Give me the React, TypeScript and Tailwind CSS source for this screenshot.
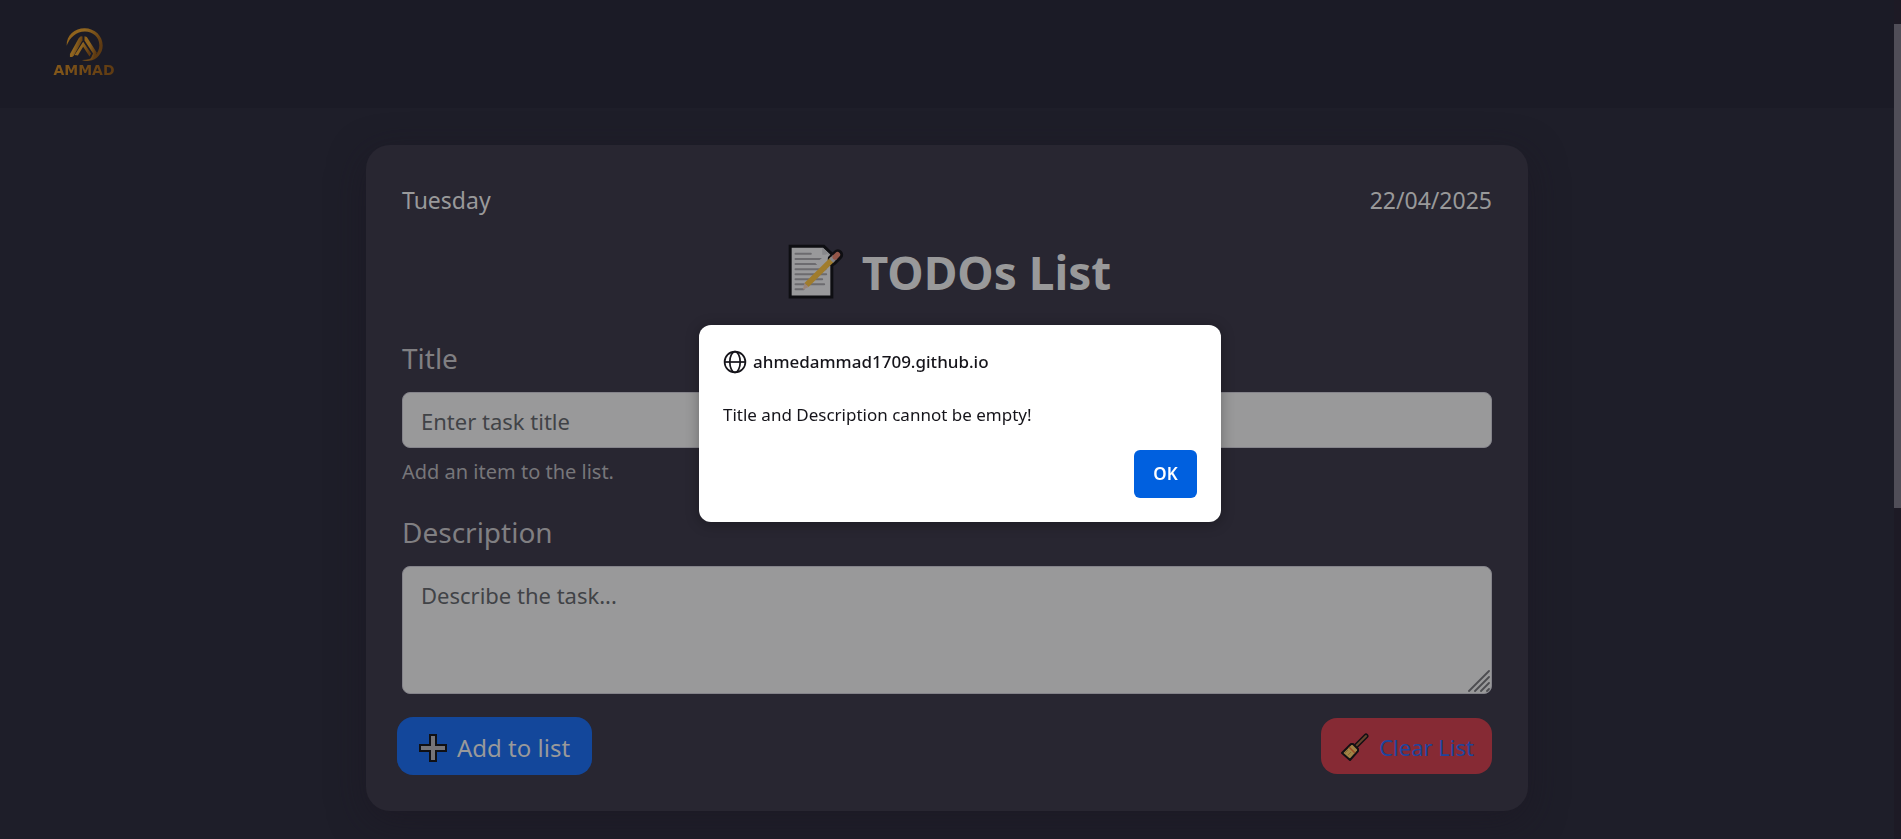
import React from 'react';

function Logo() {
  return (
    <a href="#" aria-label="Ammad home" className="flex w-16 flex-col items-center pb-1">
      <svg viewBox="108 52 118 104" className="h-[35px] w-[39px]" aria-hidden="true">
        <defs>
          <linearGradient id="gold" x1="0" y1="0" x2="1" y2="0.4">
            <stop offset="0" stopColor="#8e6018" />
            <stop offset="0.45" stopColor="#916620" />
            <stop offset="1" stopColor="#5e3a12" />
          </linearGradient>
        </defs>
        <g fill="url(#gold)">
          <path d="M113 108C112 76 138 55 167 55C199 55 222 79 222 107C222 131 204 151 182 153C174 154 166 154 159 151C190 152 212 132 212 106C212 82 192 65 168 65C143 65 123 82 113 108Z" />
          <path d="M123 133L150 84L156 79L161 80V91L135 137L130 142L123 142Z" />
          <path d="M167 79L174 81L204 128C202 138 195 147 184 151L193 131L167 92Z" />
          <path d="M163 96L187 131L182 140L163 111L147 137L137 136Z" />
        </g>
      </svg>
      <span className="bg-linear-to-r from-[#85591a] to-[#5e3a12] bg-clip-text font-['DejaVu_Sans',sans-serif] text-sm leading-4 font-bold text-transparent">
        AMMAD
      </span>
    </a>
  );
}

function MemoIcon() {
  return (
    <svg viewBox="85 76 170 168" className="h-14 w-[57px]" aria-hidden="true">
      <path d="M94 83H195L219 106V235H94Z" fill="#99999b" stroke="#0e0e12" strokeWidth="9" />
      <path d="M190 87V108H214Z" fill="#88888b" />
      <path d="M110 105H156M110 121H202M110 136H190M110 152H200M110 167H202M110 182H190M110 197H196M110 212H134" stroke="#6c6b6f" strokeWidth="6" strokeLinecap="round" />
      <path d="M219 126L237 108" stroke="#0e0e12" strokeWidth="32" strokeLinecap="round" />
      <path d="M207 104V146L190 154L170 134Z" fill="#99999b" />
      <path d="M143 199L222 121" stroke="#a07c2c" strokeWidth="17" />
      <path d="M137 193L149 205L132 213Z" fill="#9c8478" />
      <path d="M217 126L229 114" stroke="#858488" strokeWidth="17" />
      <path d="M229 115L236 108" stroke="#945548" strokeWidth="16" strokeLinecap="round" />
    </svg>
  );
}

function PlusIcon() {
  return (
    <svg viewBox="0 0 28 28" className="size-7" aria-hidden="true">
      <path d="M11 1H17V11H27V17H17V27H11V17H1V11H11Z" fill="#757478" stroke="#101014" strokeWidth="2" />
    </svg>
  );
}

function BrushIcon() {
  return (
    <svg viewBox="0 0 28 28" className="size-7" aria-hidden="true">
      <path d="M25 3L14 14" stroke="#131014" strokeWidth="5" strokeLinecap="round" />
      <path d="M25 3L13 15" stroke="#66452c" strokeWidth="2" strokeLinecap="round" />
      <path d="M10 11L12 11L17 16V18L9 27L1 20Z" fill="#a18244" stroke="#131014" strokeWidth="2" strokeLinejoin="round" />
      <path d="M8 14L14 20" stroke="#9c4a26" strokeWidth="1.5" />
      <path d="M4 20L7 17M7 22L10 19" stroke="#816a35" />
    </svg>
  );
}

function GlobeIcon() {
  return (
    <svg viewBox="0 0 24 24" className="size-6" fill="none" stroke="#15141a" strokeWidth="1.7" aria-hidden="true">
      <circle cx="12" cy="12" r="10.4" />
      <path d="M1.7 12H22.3" />
      <ellipse cx="12" cy="12" rx="5.2" ry="10.4" />
    </svg>
  );
}

function ResizeGrip() {
  return (
    <svg viewBox="0 0 22 22" className="pointer-events-none absolute right-[2px] bottom-[2px] size-[22px]" aria-hidden="true">
      <path d="M1 21L21 1M7 21L21 7M13 21L21 13M19 21L21 19" stroke="#4d4d51" strokeWidth="1.8" strokeLinecap="round" />
    </svg>
  );
}

const field =
  'block w-full rounded-lg border border-[#84838a] bg-[#99999a] px-[18px] text-[22px] leading-9 text-[#141519] placeholder:text-[#414347] placeholder:opacity-100';

export default function App() {
  return (
    <div className="flex h-screen overflow-hidden bg-[#1e1e29] font-['Noto_Sans','Open_Sans',sans-serif]">
      <div className="flex min-w-0 flex-1 flex-col">
        <header className="flex h-[108px] shrink-0 items-center bg-[#1b1b26] px-13">
          <Logo />
        </header>
        <main className="mx-auto mt-[37px] w-full max-w-[1162px] shrink-0 rounded-3xl bg-[#282631] px-9 pt-[35px] pb-9 shadow-[0_10px_36px_rgba(28,22,34,0.5)]">
          <div className="flex justify-between text-[23px] leading-10 text-[#99999a]">
            <span>Tuesday</span>
            <time dateTime="2025-04-22">22/04/2025</time>
          </div>
          <h1 className="mt-6 flex h-14 items-center justify-center gap-[18px] pl-1 text-[46px] font-bold text-[#99999a]">
            <MemoIcon />
            TODOs List
          </h1>
          <form onSubmit={(e) => e.preventDefault()}>
            <label htmlFor="title" className="mt-9 block text-[28px] leading-11 text-[#807f82]">
              Title
            </label>
            <input id="title" type="text" placeholder="Enter task title" className={`${field} mt-3 h-14 pt-0.5`} />
            <p className="mt-2 text-xl leading-8 text-[#77767a]">Add an item to the list.</p>
            <label htmlFor="description" className="mt-[22px] block text-[28px] leading-11 text-[#807f82]">
              Description
            </label>
            <div className="relative mt-3">
              <textarea id="description" placeholder="Describe the task..." className={`${field} h-32 resize-none py-2.5`} />
              <ResizeGrip />
            </div>
            <div className="-ml-[5px] mt-[23px] flex items-center justify-between">
              <button type="submit" className="flex h-[58px] items-center gap-2.5 rounded-2xl bg-[#13479b] px-[22px] pt-1 text-2xl text-[#99999a]">
                <PlusIcon />
                Add to list
              </button>
              <button type="button" className="flex h-14 items-center gap-2.5 rounded-2xl bg-[#862a34] pt-0.5 pr-[18px] pl-5 text-[22px] text-[#1c459d]">
                <BrushIcon />
                Clear List
              </button>
            </div>
          </form>
        </main>
      </div>
      <div className="w-[7px] shrink-0 bg-[#1d1a25] pt-6">
        <div className="h-[484px] bg-[#504e58]" />
      </div>

      <div className="fixed inset-0 flex items-start justify-center pt-[325px] pl-[19px]">
        <div role="alertdialog" aria-modal="true" aria-labelledby="origin" aria-describedby="message" className="w-[522px] rounded-xl bg-white p-6 text-[#15141a] shadow-[0_2px_14px_rgba(0,0,0,0.3)]">
          <div className="flex items-center gap-[6px] pt-px text-[17px] leading-6 font-medium">
            <GlobeIcon />
            <span id="origin">ahmedammad1709.github.io</span>
          </div>
          <p id="message" className="mt-[27px] text-[17px] leading-7">
            Title and Description cannot be empty!
          </p>
          <div className="mt-[21px] flex justify-end">
            <button type="button" className="h-12 w-[63px] rounded-md bg-[#0060df] text-[17px] font-semibold text-white">
              OK
            </button>
          </div>
        </div>
      </div>
    </div>
  );
}
